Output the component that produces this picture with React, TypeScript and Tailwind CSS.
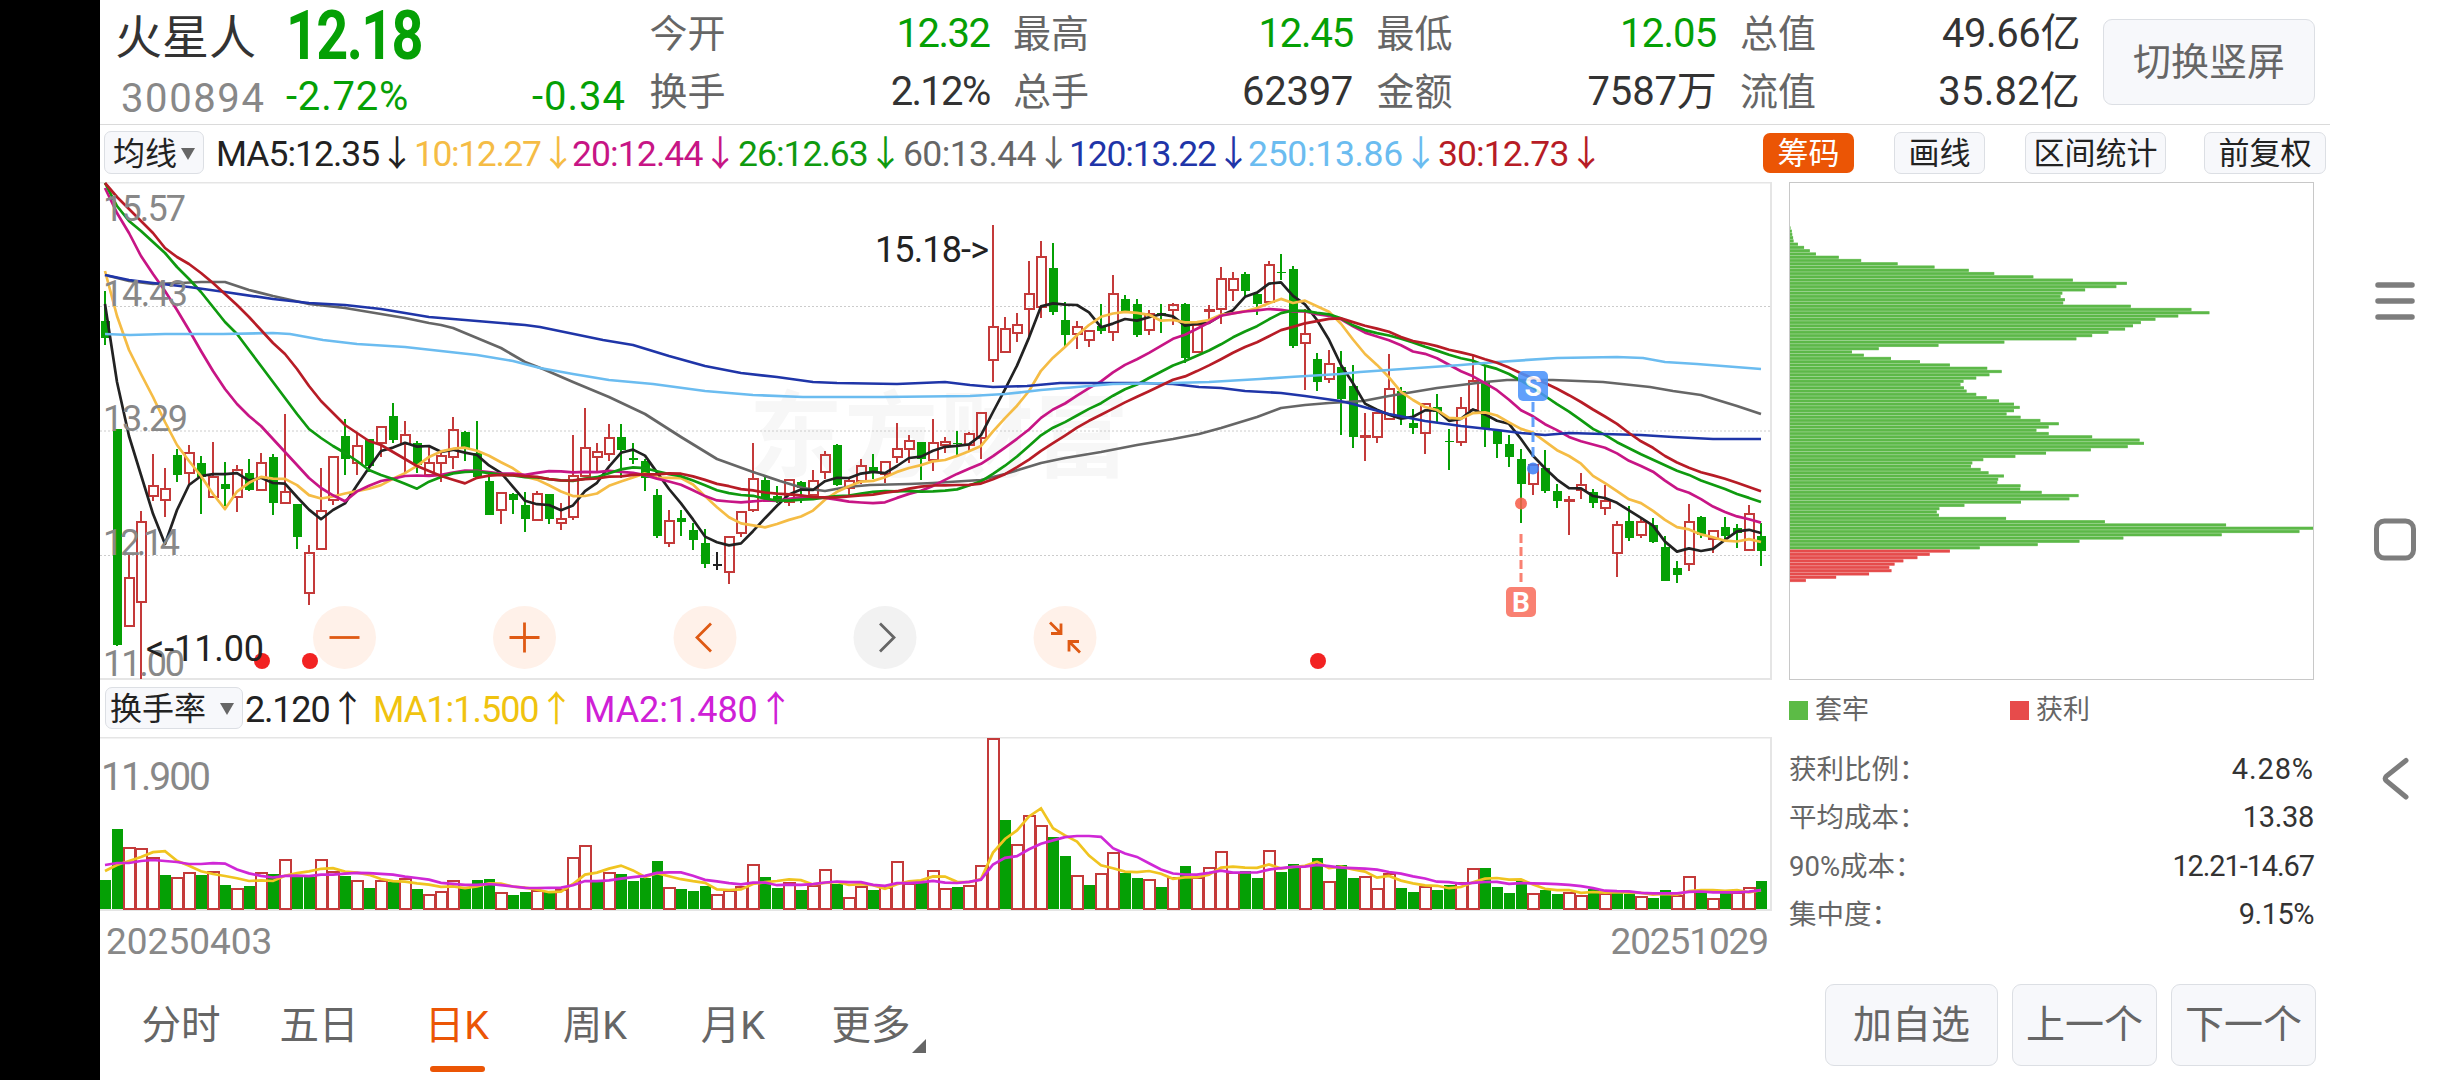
import { ReactNode } from 'react'
import clsx from 'clsx'

type Stat = { label: string; value: string; green?: boolean; tracking?: string }

const STATS: Stat[][] = [
  [
    { label: '今开', value: '12.32', green: true, tracking: 'tracking-[-1.5px]' },
    { label: '换手', value: '2.12%', tracking: 'tracking-[-1.7px]' },
  ],
  [
    { label: '最高', value: '12.45', green: true, tracking: 'tracking-[-1.2px]' },
    { label: '总手', value: '62397', tracking: 'tracking-[-0.3px]' },
  ],
  [
    { label: '最低', value: '12.05', green: true, tracking: 'tracking-[-0.8px]' },
    { label: '金额', value: '7587万', tracking: 'tracking-[-0.2px]' },
  ],
  [
    { label: '总值', value: '49.66亿', tracking: 'tracking-[-0.4px]' },
    { label: '流值', value: '35.82亿', tracking: 'tracking-[0.2px]' },
  ],
]

const AVERAGES = [
  { text: 'MA5:12.35', className: 'w-[198px] text-[#222222] tracking-[-1px]' },
  { text: '10:12.27', className: 'w-[158px] text-[#f5bc45] tracking-[-1.4px]' },
  { text: '20:12.44', className: 'w-[166px] text-[#c71585] tracking-[-0.9px]' },
  { text: '26:12.63', className: 'w-[165px] text-[#0f9a0f] tracking-[-1px]' },
  { text: '60:13.44', className: 'w-[166px] text-[#666666] tracking-[-0.6px]' },
  { text: '120:13.22', className: 'w-[179px] text-[#1f35a8] tracking-[-1.2px]' },
  { text: '250:13.86', className: 'w-[190px] text-[#6bbcf0] tracking-[-0.3px]' },
  { text: '30:12.73', className: 'w-[170px] text-[#b71c26] tracking-[-0.9px]' },
]

// direction, high, body top, body bottom, low (in pane pixels, one candle per line item)
const CANDLES = `
g 109 139 156 163|g 247 247 463 464|r 373 396 444 444|r 329 340 420 497|r 272 304 314 319|r 286 307 318 335
g 267 273 293 300|r 263 271 291 303|g 274 281 295 332|r 260 295 315 315|g 280 302 307 324|r 283 288 315 330
g 277 291 308 309|r 271 281 308 309|g 272 275 321 333|r 232 310 321 322|g 322 322 355 367|r 363 371 411 423
r 286 329 367 367|r 275 275 318 323|g 237 254 277 293|r 251 264 281 293|g 257 257 284 290|r 245 245 261 275
g 221 234 258 261|r 239 253 262 291|g 259 261 283 291|r 265 281 293 293|r 271 274 281 300|r 235 248 275 287
g 249 250 267 279|g 239 271 295 295|g 292 299 333 333|r 310 311 328 342|g 311 312 318 332|g 310 323 337 350
r 309 312 338 339|g 312 312 337 342|r 321 337 341 348|r 253 294 335 338|r 226 266 294 295|r 261 270 275 289
r 242 256 272 279|g 242 255 268 296|g 261 276 278 282|g 277 279 296 309|g 307 313 354 356|r 328 339 361 365
g 328 336 340 354|g 341 348 358 368|g 347 361 382 386|k 370 382 384 388|r 355 355 390 402|r 330 330 351 355
r 261 297 328 330|g 293 298 317 317|g 304 314 320 321|r 298 298 320 324|g 299 300 306 321|r 288 299 313 314
r 269 273 290 297|g 262 263 303 304|r 296 299 306 314|r 277 284 299 302|g 272 285 290 297|r 279 280 292 301
r 241 267 275 281|r 253 259 267 281|g 260 260 277 298|r 237 261 278 289|r 255 260 263 271|g 249 261 262 274
r 250 252 263 270|r 231 231 256 277|r 43 145 178 200|r 135 147 170 171|r 131 143 151 160|r 79 112 127 155
r 59 75 125 136|g 61 86 130 133|g 120 138 153 166|r 139 145 152 167|r 149 149 158 165|g 122 144 149 152
r 93 112 150 159|g 113 117 130 131|g 117 122 153 155|r 128 132 148 153|g 122 131 134 151|r 121 123 128 143
g 121 122 176 181|r 142 143 170 171|r 123 128 129 137|r 85 97 127 142|r 90 97 108 119|g 90 92 109 115
g 110 112 122 133|r 79 83 120 121|g 72 90 91 98|g 84 87 164 166|r 127 152 161 208|g 171 177 200 209
r 168 182 197 201|g 169 185 217 253|g 183 204 255 266|r 231 254 255 279|r 230 231 255 261|r 172 207 237 238
g 205 209 236 243|g 227 241 246 252|r 221 222 251 272|g 212 225 230 241|g 247 259 260 288|r 215 226 260 264
r 174 199 228 229|g 184 199 247 265|g 247 249 262 276|g 253 262 275 285|g 267 277 302 341|r 282 283 302 313
g 268 286 309 311|g 302 309 319 326|r 314 318 319 353|r 291 303 308 317|g 307 310 321 326|r 303 319 326 333
r 339 343 371 395|g 324 339 356 359|r 336 340 353 356|g 336 343 360 361|g 354 365 399 399|g 379 386 393 401
r 322 340 382 389|g 334 335 353 356|r 348 349 357 371|g 335 345 354 360|g 342 346 351 366|r 323 332 368 369
g 341 354 369 384`
  .trim()
  .split(/[|\n]/)
  .map((item) => {
    const [kind, ...levels] = item.split(' ')
    const [high, top, bottom, low] = levels.map(Number)
    return { kind, high, top, bottom, low }
  })

const TURNOVER = `
g143 g92 r110 r111 r120 g138 r140 r135 g138 r134 g148 r151 g149 r135 g137 r122 g138 g140 r122 r134
g139 r143 g151 r143 g145 r141 g152 r157 r154 r143 g150 g143 g142 r155 g158 g155 r153 g155 r152 r120
r108 g143 r135 g137 g144 g141 g124 r150 g152 g154 g149 r157 r153 r149 r127 g140 g151 r145 g153 r148
r132 g147 r160 r149 g153 r150 r124 r146 g144 r133 r151 g150 r148 r128 r1 g83 r107 r78 r88 g100
g119 r138 g148 r136 r115 g136 g141 r142 g150 r140 g129 r140 r130 r114 r135 g134 g141 r113 g135 g127
r128 g121 r144 g128 g141 r139 r151 r136 g151 g155 r149 g153 g148 r145 r131 g131 g150 g156 g144 r156
g153 g157 r155 r158 g152 r156 g155 g157 r159 g161 g153 r158 r139 g155 r161 g156 r155 r150 g144`
  .trim()
  .split(/\s+/)
  .map((item) => ({ kind: item[0], top: Number(item.slice(1)) }))

const CHIPS = [
  1, 4, 5, 7, 8, 18, 32, 45, 59, 111, 162, 245, 329, 407, 465, 554, 644, 767, 743, 672, 620, 616, 626, 622, 776, 914, 955,
  884, 832, 799, 781, 763, 725, 688, 652, 488, 338, 202, 141, 168, 230, 296, 364, 449, 482, 454, 424, 395, 388, 396, 402,
  424, 448, 476, 510, 523, 510, 493, 525, 570, 612, 589, 561, 589, 688, 796, 806, 769, 685, 583, 513, 440, 415, 412, 434,
  452, 487, 474, 472, 525, 524, 573, 657, 636, 526, 397, 340, 334, 339, 492, 717, 993, 1191, 1160, 983, 759, 659, 564,
  432, 364, 318, 290, 258, 238, 226, 231, 180, 105, 36,
]
const PROFIT_FROM = 99

const x = (i: number) => 5 + 12 * i

// Moving average over the plotted levels; `lead` holds the values before the window is full
const average = (values: number[], size: number, lead: number[]) =>
  values
    .map((_, i) => {
      const y =
        i < lead.length ? lead[i] : values.slice(Math.max(0, i - size + 1), i + 1).reduce((a, b) => a + b, 0) / Math.min(size, i + 1)
      return `${x(i)},${y.toFixed(1)}`
    })
    .join(' ')

const closes = CANDLES.map((c) => (c.kind === 'g' ? c.bottom : c.top))
const turnovers = TURNOVER.map((t) => t.top)

const MA60 =
  '5,93 29,99 53,102 80,101 101,100 125,100 149,108 173,114 209,122 245,126 281,132 305,136 329,141 341,143 353,146 377,156 401,166 425,180 443,187 473,200 509,215 545,232 581,255 617,277 653,290 680,299 703,306 725,309 747,305 770,303 809,302 833,301 881,298 905,292 941,281 965,276 1001,270 1037,263 1073,257 1099,252 1121,246 1157,235 1181,226 1205,223 1229,221 1263,219 1289,214 1313,210 1337,206 1361,203 1385,200 1407,198 1453,198 1503,200 1550,205 1573,209 1601,213 1637,224 1661,232'
const MA120 =
  '5,93 29,98 53,101 89,105 125,110 173,117 209,121 245,123 281,127 329,135 353,137 389,140 425,143 440,145 503,158 533,163 569,174 605,184 641,191 677,195 713,200 737,201 797,202 845,200 870,203 893,205 927,204 960,201 1001,201 1043,201 1073,202 1099,205 1121,206 1145,209 1181,211 1205,214 1240,219 1253,222 1289,232 1325,239 1361,244 1397,248 1421,251 1445,253 1469,251 1503,252 1541,253 1573,255 1613,257 1661,257'
const MA250 =
  '5,152 30,153 65,152 123,152 173,151 190,152 223,158 257,162 305,165 341,169 377,173 413,179 440,186 473,192 509,198 553,202 605,209 653,213 703,215 783,215 870,214 905,212 941,208 977,205 1013,202 1073,201 1109,200 1160,197 1190,195 1240,192 1260,190 1303,187 1361,183 1397,180 1457,176 1517,175 1543,176 1565,180 1597,182 1661,187'

const LINES = [
  { color: '#666666', points: MA60 },
  { color: '#222222', points: average(closes, 5, [122, 200, 254, 293]) },
  { color: '#f5bc45', points: average(closes, 10, [89, 134, 168, 192, 215, 240, 263, 279, 294]) },
  {
    color: '#c71585',
    points: average(closes, 20, [6, 31, 51, 74, 92, 109, 128, 148, 169, 189, 207, 222, 234, 244, 257, 270, 283, 296, 306]),
  },
  {
    color: '#0f9a0f',
    points: average(
      closes,
      26,
      [1, 24, 39, 49, 60, 71, 85, 97, 110, 125, 140, 152, 168, 184, 200, 216, 232, 247, 256, 264, 271, 279, 288, 293, 297],
    ),
  },
  { color: '#1f35a8', points: MA120 },
  { color: '#6bbcf0', points: MA250 },
  {
    color: '#b71c26',
    points: average(
      closes,
      30,
      [1, 15, 27, 39, 51, 66, 75, 82, 91, 101, 112, 123, 135, 148, 161, 172, 187, 204, 219, 231, 243, 251, 259, 263, 270, 277, 284, 289, 294],
    ),
  },
]

const PillButton = ({ children, className }: { children: ReactNode; className?: string }) => (
  <button
    className={clsx(
      'flex items-center justify-center whitespace-nowrap rounded-[7px] border border-[#dcdfe4] bg-[#f7f8fb]',
      className,
    )}
  >
    {children}
  </button>
)

const Caret = ({ className }: { className?: string }) => (
  <svg viewBox="0 0 14 12" className={clsx('h-3 w-3.5 fill-[#666666]', className)}>
    <path d="M0 0H14L7 12Z" />
  </svg>
)

const Header = () => (
  <header className="flex h-[125px] border-b border-[#dadada]">
    <div className="ml-[15px] flex w-[171px] flex-col">
      <span className="mt-[5px] whitespace-nowrap text-[47px] leading-[66px] text-[#333333]">火星人</span>
      <span className="ml-[6px] mt-[3px] text-[40px] leading-[50px] tracking-[1.6px] text-[#888888]">300894</span>
    </div>
    <div className="flex w-[340px] flex-col text-[#05a005]">
      <span className="w-[180px] origin-left scale-x-[0.82] text-[68px] font-bold leading-[72px] tracking-[-2px]">12.18</span>
      <div className="mt-[3px] flex justify-between text-[40px] leading-[44px]">
        <span className="tracking-[0.8px]">-2.72%</span>
        <span className="tracking-[1px]">-0.34</span>
      </div>
    </div>
    {STATS.map((column) => (
      <div key={column[0].label} className="ml-[23.5px] flex w-[340px] flex-col pt-[5px]">
        {column.map((stat) => (
          <div key={stat.label} className="flex h-[58px] items-center justify-between whitespace-nowrap">
            <span className="text-[38px] leading-[58px] text-[#666666]">{stat.label}</span>
            <span
              className={clsx('text-[40px] leading-[58px]', stat.tracking, stat.green ? 'text-[#05a005]' : 'text-[#333333]')}
            >
              {stat.value}
            </span>
          </div>
        ))}
      </div>
    ))}
    <PillButton className="ml-[23px] mt-[19px] h-[86px] w-[212px] rounded-[9px] text-[38px] text-[#666666]">切换竖屏</PillButton>
  </header>
)

const AverageBar = () => (
  <div className="flex h-[57px] pl-1 pt-[6px] text-[#222222]">
    <PillButton className="h-[43px] w-[100px] pt-0.5 text-[32px]">
      均线
      <Caret className="ml-1" />
    </PillButton>
    <div className="ml-3 flex w-[1547px] whitespace-nowrap text-[35.5px] leading-[47px]">
      {AVERAGES.map((item) => (
        <span key={item.text} className={item.className}>
          {item.text}↓
        </span>
      ))}
    </div>
    <button className="mt-0.5 h-10 w-[91px] rounded-[7px] bg-[#eb5505] pt-px text-[31px] leading-[39px] text-white">筹码</button>
    <PillButton className="ml-10 mt-px h-[42px] w-[91px] pt-0.5 text-[31px]">画线</PillButton>
    <PillButton className="ml-10 mt-px h-[42px] w-[141px] pt-0.5 text-[31px]">区间统计</PillButton>
    <PillButton className="ml-[38px] mt-px h-[42px] w-[122px] pt-0.5 text-[31px]">前复权</PillButton>
  </div>
)

const Candle = ({ index }: { index: number }) => {
  const { kind, high, top, bottom, low } = CANDLES[index]
  const cx = x(index)
  if (kind === 'r') {
    return (
      <g stroke="#c43a3a" strokeWidth={2} fill="none">
        <path d={`M${cx} ${high}V${top}M${cx} ${bottom}V${low}`} />
        <rect x={cx - 4} y={top} width={9} height={bottom - top} />
      </g>
    )
  }
  const color = kind === 'g' ? '#05a005' : '#222222'
  return (
    <g fill={color}>
      <rect x={cx - 1} y={high} width={2} height={low - high} />
      <rect x={cx - 4} y={top} width={9} height={bottom - top} />
    </g>
  )
}

const ROUND_BUTTONS = [
  { cx: 244.5, color: '#df5a14', back: '#fff1e9', icon: 'M-15 0H15' },
  { cx: 424.5, color: '#df5a14', back: '#fff1e9', icon: 'M-15 0H15M0 -15V15' },
  { cx: 605, color: '#df5a14', back: '#fff1e9', icon: 'M6 -14L-8 0L6 14' },
  { cx: 785, color: '#666666', back: '#f2f2f2', icon: 'M-5 -14L9 0L-5 14' },
  { cx: 965, color: '#df5a14', back: '#fff1e9', icon: 'M-15 -15L-4 -4M-4 -14V-4H-14M15 15L4 4M4 14V4H14' },
]

const PriceChart = () => (
  <svg viewBox="0 0 1672 498" className="h-[498px] w-[1672px]">
    <text x="649" y="288" fontSize="94" fontWeight="700" fill="#f7f7f7" textLength="380">
      东方财富
    </text>
    {[124.5, 249, 373.5].map((y) => (
      <line key={y} x1="0" x2="1671" y1={y} y2={y} stroke="#cccccc" strokeDasharray="2 2" />
    ))}
    <path d="M0 0.5H1671V497H0" fill="none" stroke="#e5e5e5" strokeWidth="2" />
    {CANDLES.map((_, i) => (
      <Candle key={i} index={i} />
    ))}
    {LINES.map((line) => (
      <polyline key={line.color} points={line.points} fill="none" stroke={line.color} strokeWidth="2.7" strokeLinejoin="round" />
    ))}
    <g fontSize="36" fill="#888888">
      <text x="3" y="39" textLength="83">15.57</text>
      <text x="3" y="124" textLength="85">14.43</text>
      <text x="3" y="249" textLength="85">13.29</text>
      <text x="3" y="373" textLength="77">12.14</text>
      <text x="3" y="494" textLength="82">11.00</text>
    </g>
    {ROUND_BUTTONS.map((button) => (
      <g key={button.cx} transform={`translate(${button.cx} 455.5)`}>
        <circle r="31.5" fill={button.back} />
        <path d={button.icon} fill="none" stroke={button.color} strokeWidth="2.8" />
      </g>
    ))}
    {[162, 210, 1218].map((cx) => (
      <circle key={cx} cx={cx} cy="479" r="8" fill="#f22222" />
    ))}
    <g fontSize="36" fill="#222222">
      <text x="775" y="80" textLength="114">15.18-&gt;</text>
      <text x="46" y="479" textLength="118">&lt;-11.00</text>
    </g>
    <g opacity="0.88" fontSize="28" fontWeight="700" textAnchor="middle">
      <path d="M1433 220V278" stroke="#4f95fa" strokeWidth="3" strokeDasharray="10 5" />
      <circle cx="1433" cy="286.5" r="6" fill="#3f80f5" />
      <rect x="1418" y="189" width="30" height="30" rx="5" fill="#4c94fb" />
      <text x="1433" y="214" fill="#ffffff">S</text>
      <path d="M1421 352V403" stroke="#f9705f" strokeWidth="3" strokeDasharray="9 4" />
      <circle cx="1421" cy="321.5" r="6" fill="#f8604c" />
      <rect x="1406" y="405" width="30" height="30" rx="5" fill="#f9705f" />
      <text x="1421" y="430" fill="#ffffff">B</text>
    </g>
  </svg>
)

const TurnoverBar = () => (
  <div className="flex h-[57px] whitespace-nowrap pl-[5px] pt-[7px] text-[36px] leading-[46px]">
    <PillButton className="h-[42px] w-[138px] pr-1 pt-0.5 text-[32px] text-[#222222]">
      换手率
      <Caret className="ml-[14px]" />
    </PillButton>
    <span className="ml-0.5 w-[128px] tracking-[-1.2px] text-[#222222]">2.120↑</span>
    <span className="w-[211px] tracking-[-1px] text-[#f0c30f]">MA1:1.500↑</span>
    <span className="tracking-[-0.1px] text-[#cf20d6]">MA2:1.480↑</span>
  </div>
)

const TurnoverChart = () => (
  <svg viewBox="0 0 1672 174" className="h-[174px] w-[1672px]">
    <path d="M0 0.5H1671V173H0" fill="none" stroke="#e5e5e5" strokeWidth="2" />
    {TURNOVER.map(({ kind, top }, i) =>
      kind === 'g' ? (
        <rect key={i} x={x(i) - 5} y={top} width={11} height={172 - top} fill="#05a005" />
      ) : (
        <rect key={i} x={x(i) - 5} y={top + 1} width={11} height={171 - top} fill="#ffffff" stroke="#c43a3a" strokeWidth={2} />
      ),
    )}
    <polyline points={average(turnovers, 5, [134, 128, 124, 120])} fill="none" stroke="#f0c420" strokeWidth="2.7" />
    <polyline
      points={average(turnovers, 10, [128, 126, 126, 124, 123, 124, 125, 127, 127])}
      fill="none"
      stroke="#cf28d6"
      strokeWidth="2.7"
    />
    <text x="1" y="53" fontSize="39" fill="#888888" textLength="110">
      11.900
    </text>
  </svg>
)

const Tab = ({ children, active }: { children: ReactNode; active?: boolean }) => (
  <div className={clsx('flex w-[138px] flex-col items-center text-[39.5px] leading-[50px]', active ? 'text-[#eb5505]' : 'text-[#666666]')}>
    <span className="whitespace-nowrap">{children}</span>
    {active && <span className="mt-[15px] h-1.5 w-[55px] rounded-full bg-[#eb5505]" />}
  </div>
)

const ChipChart = () => (
  <div className="h-[498px] w-[525px] border border-[#c8c8c8]">
    <svg viewBox="0 0 1191 496" preserveAspectRatio="none" className="h-full w-full">
      {CHIPS.map((width, i) => (
        <g key={i} fill={i < PROFIT_FROM ? '#5cb848' : '#e54b4b'}>
          <rect y={43.2 + 3.265 * i} width={width} height={3.3} opacity="0.6" />
          <rect y={43.6 + 3.265 * i} width={width} height={2.5} />
        </g>
      ))}
    </svg>
  </div>
)

const COSTS = [
  { label: '获利比例：', value: '4.28%', tracking: 'tracking-[0.9px]' },
  { label: '平均成本：', value: '13.38', tracking: 'tracking-[-0.3px]' },
  { label: '90%成本：', value: '12.21-14.67', tracking: 'tracking-[-1.1px]' },
  { label: '集中度：', value: '9.15%', tracking: 'tracking-[-0.5px]' },
]

const ChipPanel = () => (
  <aside className="ml-[17px] w-[525px]">
    <ChipChart />
    <div className="mt-[10px] flex h-10 items-center text-[27px] text-[#666666]">
      <span className="mr-[7px] h-[19px] w-[19px] bg-[#5cbb46]" />
      <span className="w-[195px]">套牢</span>
      <span className="mr-[7px] h-[19px] w-[19px] bg-[#e74b4b]" />
      <span>获利</span>
    </div>
    <div className="mt-[15px] text-[27.5px]">
      {COSTS.map((cost) => (
        <div key={cost.label} className="flex h-[48.5px] items-center justify-between">
          <span className="text-[#666666]">{cost.label}</span>
          <span className={clsx('text-[29px] text-[#333333]', cost.tracking)}>{cost.value}</span>
        </div>
      ))}
    </div>
  </aside>
)

const SystemNav = () => (
  <nav className="w-[130px]">
    <svg viewBox="0 0 130 1080" className="h-[1080px] w-[130px]" fill="none" stroke="#7d7d7d" strokeLinecap="round">
      <path d="M48 285H82M48 301H82M48 317H82" strokeWidth="5.5" />
      <rect x="46.5" y="521" width="37" height="37" rx="8" strokeWidth="5" />
      <path d="M76 760.5L56.5 776Q54 778.5 56.5 781L76 797" strokeWidth="5" />
    </svg>
  </nav>
)

export default function App() {
  return (
    <div className="flex h-[1080px] w-[2460px] overflow-hidden bg-white font-['Roboto','Noto_Sans_CJK_SC',sans-serif]">
      <div className="w-[100px] shrink-0 bg-black" />
      <main className="flex w-[2230px] shrink-0 flex-col">
        <Header />
        <AverageBar />
        <div className="flex">
          <section className="w-[1672px]">
            <PriceChart />
            <TurnoverBar />
            <TurnoverChart />
            <div className="flex h-[63px] justify-between pl-1.5 pr-1 pt-[9px] text-[37px] leading-[44px] text-[#888888]">
              <span>20250403</span>
              <span className="tracking-[-1.1px]">20251029</span>
            </div>
          </section>
          <ChipPanel />
        </div>
        <footer className="flex h-[106px]">
          <div className="flex grow pl-[12px] pt-[27px]">
            <Tab>分时</Tab>
            <Tab>五日</Tab>
            <Tab active>日K</Tab>
            <Tab>周K</Tab>
            <Tab>月K</Tab>
            <Tab>更多</Tab>
            <svg viewBox="0 0 14 14" className="-ml-[28px] mt-[38px] h-3.5 w-3.5 fill-[#666666]">
              <path d="M14 0V14H0Z" />
            </svg>
          </div>
          <div className="mr-[14px] mt-[10px] flex gap-[14px]">
            <PillButton className="h-[82px] w-[173px] rounded-[9px] text-[39px] text-[#666666]">加自选</PillButton>
            <PillButton className="h-[82px] w-[145px] rounded-[9px] text-[39px] text-[#666666]">上一个</PillButton>
            <PillButton className="h-[82px] w-[145px] rounded-[9px] text-[39px] text-[#666666]">下一个</PillButton>
          </div>
        </footer>
      </main>
      <SystemNav />
    </div>
  )
}
